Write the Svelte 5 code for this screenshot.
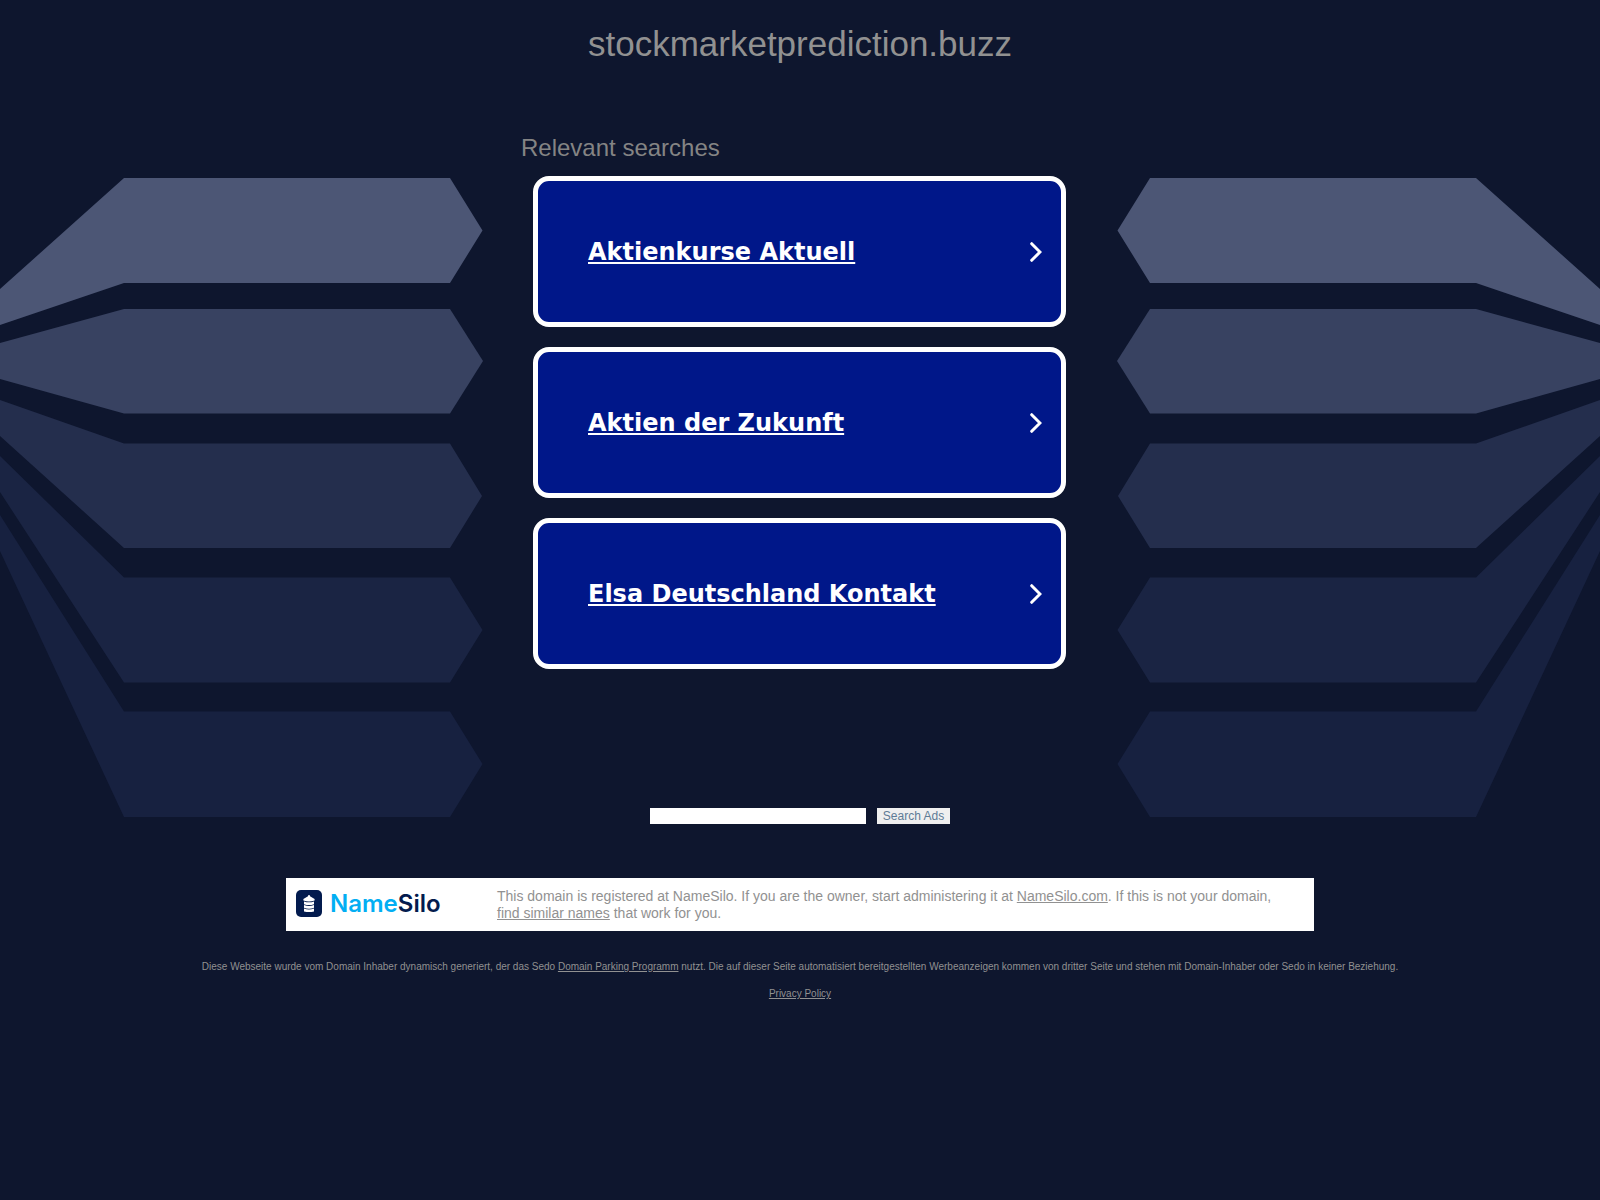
<script>
  const searches = ['Aktienkurse Aktuell', 'Aktien der Zukunft', 'Elsa Deutschland Kontakt'];

  const bands = [
    { fill: '#4c5675', points: '0,111 124,0 450,0 482.5,52.5 450,105 124,105 0,147' },
    { fill: '#384261', points: '0,165 124,131 450,131 483,183 450,235.5 124,235.5 0,201' },
    { fill: '#242e4d', points: '0,222 124,265.5 450,265.5 482,318 450,370 124,370 0,258' },
    { fill: '#1a2443', points: '0,278 124,399.5 450,399.5 482.5,452 450,504.5 124,504.5 0,314' },
    { fill: '#172140', points: '0,337 124,533.5 450,533.5 482.5,586 450,639 124,639 0,373' }
  ];

  let query = $state('');
</script>

{#snippet art(mirrored)}
  <svg class="art" class:mirrored width="484" height="640" viewBox="0 0 484 640" aria-hidden="true">
    {#each bands as band}
      <polygon points={band.points} fill={band.fill} />
    {/each}
  </svg>
{/snippet}

<div class="page">
  <div class="backdrop">
    {@render art(false)}
    {@render art(true)}
  </div>

  <header>
    <h1>stockmarketprediction.buzz</h1>
  </header>

  <main>
    <section class="related">
      <h2>Relevant searches</h2>
      <ul>
        {#each searches as term}
          <li>
            <a class="card" href="#search">
              <span class="term">{term}</span>
              <svg width="12" height="20" viewBox="0 0 12 20" aria-hidden="true">
                <path d="M1.7 1.7 10 10 1.7 18.3" fill="none" stroke="#fff" stroke-width="3" stroke-linecap="round" />
              </svg>
            </a>
          </li>
        {/each}
      </ul>
    </section>

    <form class="search" onsubmit={(event) => event.preventDefault()}>
      <input type="text" aria-label="Search" bind:value={query} />
      <button type="submit">Search Ads</button>
    </form>

    <section class="registrar">
      <a class="logo" href="#namesilo">
        <svg width="26" height="27" viewBox="0 0 26 27" aria-hidden="true">
          <rect width="26" height="27" rx="5" fill="#031b4e" />
          <path d="M12 5.2H14V6.2L18.6 9V10.4Q13 12.6 7.4 10.4V9L12 6.2Z" fill="#fff" />
          <path d="M8 11.4Q13 13.2 18 11.4V14.2Q13 16 8 14.2ZM8 15Q13 16.8 18 15V17.8Q13 19.6 8 17.8ZM8 18.6Q13 20.4 18 18.6V21.4Q13 22.4 8 21.4Z" fill="#fff" />
        </svg>
        <span class="wordmark">Name<b>Silo</b></span>
      </a>
      <p>
        This domain is registered at NameSilo. If you are the owner, start administering it at
        <a href="#namesilo">NameSilo.com</a>. If this is not your domain,
        <a href="#similar">find similar names</a> that work for you.
      </p>
    </section>
  </main>

  <footer>
    <p>
      Diese Webseite wurde vom Domain Inhaber dynamisch generiert, der das Sedo
      <a href="#parking">Domain Parking Programm</a> nutzt. Die auf dieser Seite automatisiert bereitgestellten
      Werbeanzeigen kommen von dritter Seite und stehen mit Domain-Inhaber oder Sedo in keiner Beziehung.
    </p>
    <p><a href="#privacy">Privacy Policy</a></p>
  </footer>
</div>

<style>
  :global(body) {
    background: #0e162e;
  }

  .page {
    position: relative;
    min-height: 100vh;
    overflow: hidden;
    color: #919191;
    font-family: Arial, 'Liberation Sans', sans-serif;
  }

  .backdrop {
    position: absolute;
    inset: 178px 0 auto;
    z-index: -1;
    display: flex;
    justify-content: space-between;
  }

  .art {
    flex: none;
  }

  .mirrored {
    transform: scaleX(-1);
  }

  h1,
  h2,
  p,
  ul {
    margin: 0;
    padding: 0;
    font-weight: 400;
  }

  header {
    padding: 23px 20px 69px;
    text-align: center;
  }

  h1 {
    font-size: 35px;
    line-height: 42px;
  }

  main {
    display: flex;
    flex-direction: column;
    align-items: center;
  }

  .related {
    box-sizing: border-box;
    width: 100%;
    max-width: 558px;
  }

  h2 {
    color: #848484;
    font-size: 24px;
    line-height: 28px;
  }

  ul {
    display: grid;
    gap: 20px;
    padding: 14px 13px 0 12px;
    list-style: none;
  }

  .card {
    display: flex;
    align-items: center;
    justify-content: space-between;
    box-sizing: border-box;
    min-height: 151px;
    padding: 0 19px 0 50px;
    border: 5px solid #fff;
    border-radius: 16px;
    background: #001789;
    color: #fff;
    font: 700 24px/32px Verdana, 'DejaVu Sans', sans-serif;
  }

  .search {
    display: flex;
    gap: 11px;
    margin-top: 139px;
  }

  input,
  button {
    height: 16px;
    box-sizing: border-box;
    border: 0;
    border-radius: 0;
    font: 12px/16px Arial, 'Liberation Sans', sans-serif;
  }

  input {
    width: 216px;
    padding: 0 4px;
    background: #fff;
  }

  button {
    padding: 0 6px;
    background: #efefef;
    color: #5e7b96;
  }

  .registrar {
    display: flex;
    align-items: flex-start;
    box-sizing: border-box;
    width: calc(100% - 40px);
    max-width: 1028px;
    margin-top: 54px;
    padding: 10px 20px 9px 10px;
    background: #fff;
    font-size: 14px;
    line-height: 17px;
  }

  .registrar p {
    flex: 1;
  }

  .logo {
    display: flex;
    flex: none;
    align-items: center;
    gap: 8px;
    width: 201px;
    height: 31px;
    text-decoration: none;
  }

  .wordmark {
    color: #02aef3;
    font: 600 24px/27px Inter, sans-serif;
  }

  .wordmark b {
    color: #031b4e;
    font-weight: 600;
  }

  footer {
    display: grid;
    gap: 15px;
    padding: 30px 20px;
    font-size: 10px;
    line-height: 12px;
    text-align: center;
  }

  .registrar p a,
  footer a {
    color: inherit;
  }
</style>
